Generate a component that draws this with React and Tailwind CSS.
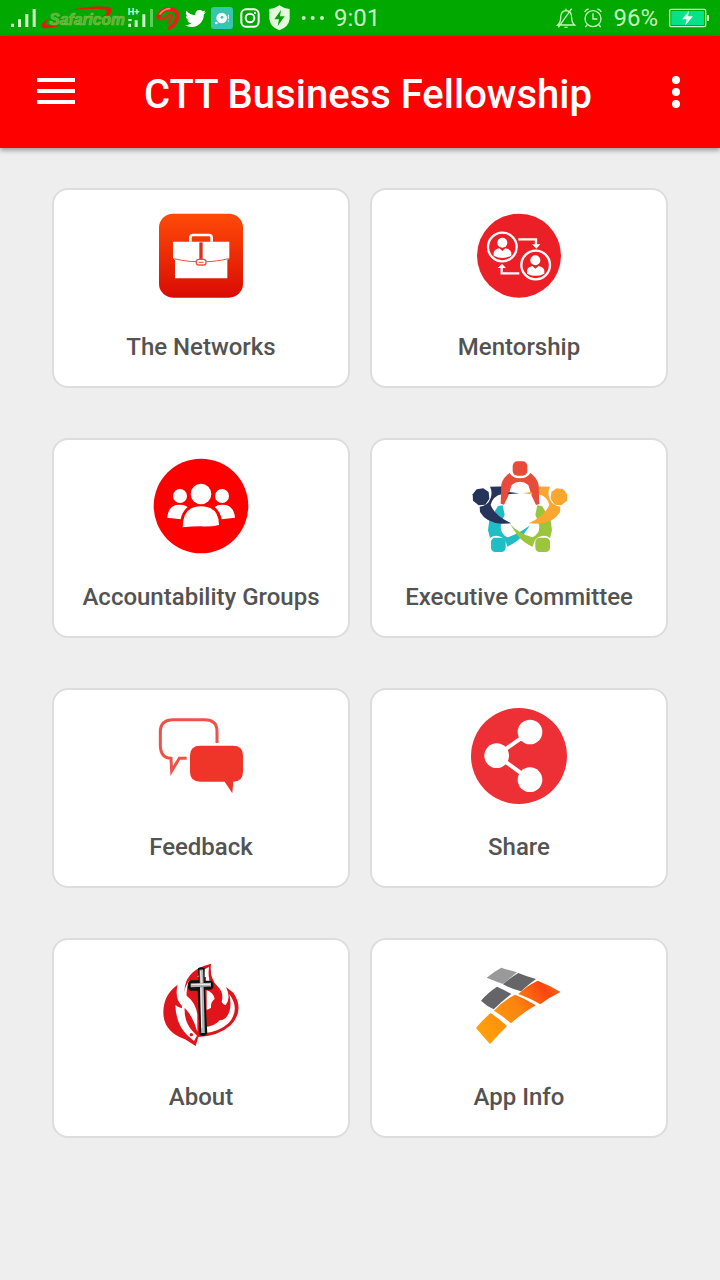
import React from "react";
import { FaTwitter } from "react-icons/fa";

const BriefcaseIcon = () => (
	<svg viewBox="9 9 288 288" className="size-24" aria-hidden="true">
		<defs>
			<linearGradient id="briefcase" x1="0" y1="0" x2="0" y2="1">
				<stop offset="0" stopColor="#ff4b08" />
				<stop offset="1" stopColor="#d90b04" />
			</linearGradient>
		</defs>
		<rect x="27" y="26" width="252" height="252" rx="42" fill="url(#briefcase)" />
		<path d="M121 110V98q0-8 9-8h46q9 0 9 8v12" fill="none" stroke="#fff" strokeWidth="8" />
		<path d="M69 110h169v50l-6 5v55H75v-55l-6-5z" fill="#fff" />
		<path d="M153 112v52" stroke="#d8321c" strokeWidth="10" />
		<path d="M71 161q40 9 67 9M236 161q-40 9-67 9" fill="none" stroke="#e8553c" strokeWidth="3" />
		<rect x="139" y="163" width="29" height="17" rx="7" fill="#fff" stroke="#e8553c" strokeWidth="4" />
		<path d="M146 172h15" stroke="#e8553c" strokeWidth="3" />
	</svg>
);

const MentorIcon = () => (
	<svg viewBox="9 9 288 288" className="size-24" aria-hidden="true">
		<circle cx="153" cy="152" r="126" fill="#ec1f27" />
		<g fill="none" stroke="#fff" strokeWidth="7">
			<circle cx="103" cy="126" r="43" />
			<circle cx="203" cy="180" r="43" />
			<path d="M151 103h53v18M154 205h-53v-19" />
		</g>
		<g fill="#fff">
			<path d="M192 118h25l-12 13zM89 189h25l-12-13z" />
			<circle cx="103" cy="113" r="15" />
			<path d="M77 152v-9q3-11 17-13l9 8 9-8q15 2 18 13v9q-26 14-53 0z" />
			<circle cx="202" cy="166" r="15" />
			<path d="M177 206v-10q3-10 16-13l9 8 10-8q14 3 17 13v10q-26 13-52 0z" />
		</g>
	</svg>
);

const GroupIcon = () => (
	<svg viewBox="21 18 288 288" className="size-24" aria-hidden="true">
		<circle cx="165" cy="162" r="142" fill="#fe0000" />
		<g fill="#fff">
			<circle cx="102" cy="132" r="21" />
			<circle cx="228" cy="132" r="21" />
			<path d="M64 197q3-39 36-39 15-1 25 7-17 14-21 37zM267 197q-4-39-37-39-14-1-24 7 17 14 21 37z" />
			<circle cx="165" cy="126" r="31" />
			<path d="M110 226q0-63 54-63 55 0 55 56-26 6-54 4-27 0-55 3z" />
		</g>
	</svg>
);

const CommitteeIcon = () => (
	<svg viewBox="21 18 288 288" className="size-24" aria-hidden="true">
		<g fill="#1fbdc5">
			<path d="M116 160l-14 2-26 42-4 31 6 23q10-8 24-6 22 2 28 32 30-14 48-36l20-28q-33 25-67 36-27-12-19-44l10-24z" />
			<rect x="81" y="257" width="44" height="43" rx="13" />
		</g>
		<g fill="#9bc53b">
			<path d="M220 160l14 2 26 42 4 31-6 23q-10-8-24-6-22 2-28 32-26-10-44-32l-24-36q27 29 67 40 27-12 19-44l-10-24z" />
			<rect x="214" y="257" width="44" height="43" rx="13" />
		</g>
		<g fill="#26345c">
			<path d="M78 104l57-1 31 21-54 3q-24 5-32 31 10 32 62 56l-30 1q-46-3-64-35l-1-16q25-2 33-26 6-18-2-34z" />
			<path d="M38 112l20-3 16 11 2 20-12 18-20 2-17-14-1-19z" />
		</g>
		<g fill="#fba62f">
			<path d="M258 104l-57-1-25 21 48 3q24 5 32 31-10 32-62 56l30 1q46-3 64-35l1-16q-25-2-33-26-6-18 2-34z" />
			<path d="M298 112l-20-3-16 11-2 20 12 18 20 2 17-14 1-19z" />
		</g>
		<path d="M144 92q24-24 48 0l14 32-38 6-38-6z" fill="#fff" />
		<g fill="#e94b3b">
			<path d="M120 158l-10-3 2-58q5-21 25-34 8 16 31 16 22 0 31-16 20 14 25 35l2 58-10 3-13-28-10-32q-25-20-50 0l-10 32z" />
			<rect x="146" y="28" width="44" height="43" rx="14" />
		</g>
		<path d="M134 121l32 3-32 4zM202 121l-26 3 26 4z" fill="#fff" />
		<path d="M135 120l31 4-36 3z" fill="#26345c" />
		<path d="M201 120l-25 4 30 3z" fill="#fba62f" />
	</svg>
);

const FeedbackIcon = () => (
	<svg viewBox="9 9 288 288" className="size-24" aria-hidden="true">
		<path
			d="M201 114V78q0-34-38-34H70q-39 0-39 36v40q0 39 32 40l2 38 23-38h22"
			fill="none"
			stroke="#f0524a"
			strokeWidth="9"
		/>
		<path
			d="M151 122h98q30 0 30 29v49q0 29-29 30l-3 35-23-35h-73q-31 0-31-29v-50q0-29 31-29z"
			fill="#ef3529"
		/>
	</svg>
);

const ShareIcon = () => (
	<svg viewBox="21 18 288 288" className="size-24" aria-hidden="true">
		<circle cx="165" cy="162" r="144" fill="#ec3036" />
		<path d="M198 90L98 160l100 73" fill="none" stroke="#fff" strokeWidth="12" />
		<g fill="#fff">
			<circle cx="198" cy="90" r="37" />
			<circle cx="98" cy="161" r="37" />
			<circle cx="198" cy="233" r="37" />
		</g>
	</svg>
);

const FlameIcon = () => (
	<svg viewBox="9 9 288 288" className="size-24" aria-hidden="true">
		<path
			d="M183 26q-46 12-63 35-19 24-16 53-10 20-8 39-23-23-13-64-43 30-43 83 0 58 65 81l32 20 8-27q60-2 97-35 43-45 8-98l-22-17q16 33-1 55-9-3-12-11 8-27-13-47-24-24-19-67z"
			fill="#e0141b"
		/>
		<path d="M177 36q-4 30 5 52h-14V66h-26q13-20 35-30z" fill="#fff" />
		<path
			d="M118 76q-10 22-8 46 28 22 32 56v52q-12-44-38-72-2 40 20 66l17 18-9 16-20-17Q78 208 76 150q10 8 20 10-2-34 6-48 4-20 16-36z"
			fill="#fff"
		/>
		<path d="M170 106q20 6 24 26-13 10-11 26-8 6-13 6z" fill="#fff" />
		<path
			d="M238 118q34 46-2 86-26 24-68 30l-1-18q26-2 42-20 22-2 29-26 7-22 0-52z"
			fill="#fff"
		/>
		<circle cx="124" cy="239" r="5" fill="#e0141b" />
		<path
			d="M144 40q9-7 20 0v37h20l6 7v15l-8 5h-17l7 132q-11 11-23 4l-6-133h-23l-6-7V84l8-8h24z"
			fill="#111"
		/>
		<path d="M154 44l5 190M122 91l61-2" stroke="#b0b2b3" strokeWidth="11" fill="none" />
		<path d="M152 48l2 35M124 88h56M153 98l2 120" stroke="#f2f2f2" strokeWidth="3" fill="none" />
	</svg>
);

const TilesIcon = () => (
	<svg viewBox="9 9 288 288" className="size-24" aria-hidden="true">
		<defs>
			<linearGradient id="tiles" gradientUnits="userSpaceOnUse" x1="40" y1="240" x2="270" y2="90">
				<stop offset="0" stopColor="#ffa00a" />
				<stop offset="0.5" stopColor="#fb850f" />
				<stop offset="0.85" stopColor="#fb4510" />
				<stop offset="1" stopColor="#fa6818" />
			</linearGradient>
		</defs>
		<path d="M100 38q25 8 47 14l-42 35q-22-8-49-19 21-18 44-30z" fill="#999" />
		<path d="M151 54q26 11 53 18-21 15-45 37-29-7-54-21 20-19 46-34zM87 95q21 9 43 22-30 23-53 46-20-9-38-26 19-23 48-42z" fill="#656568" />
		<path
			d="M209 77q34 13 69 34-34 15-61 37-32-19-66-31 24-24 58-40zM141 119q32 12 62 32-40 23-74 54-25-22-51-38 27-30 63-48zM68 174q26 18 49 39-23 23-51 54-22-24-42-48 22-27 44-45z"
			fill="url(#tiles)"
		/>
	</svg>
);

const tiles = [
	{ label: "The Networks", Icon: BriefcaseIcon },
	{ label: "Mentorship", Icon: MentorIcon },
	{ label: "Accountability Groups", Icon: GroupIcon },
	{ label: "Executive Committee", Icon: CommitteeIcon },
	{ label: "Feedback", Icon: FeedbackIcon },
	{ label: "Share", Icon: ShareIcon },
	{ label: "About", Icon: FlameIcon },
	{ label: "App Info", Icon: TilesIcon },
];

const StatusBar = () => (
	<div className="flex h-9 items-center justify-between bg-[#00a800] pl-[10px] pr-2 text-2xl text-[#c8f5c0]">
		<div className="flex items-center">
			<svg viewBox="30 0 84 108" className="h-9 w-7" fill="#d5f8cf" aria-hidden="true">
				<path d="M33 71h9v10h-9zM54 58h9v23h-9zM76 42h9v39h-9zM98 27h9v54h-9z" />
			</svg>
			<svg viewBox="114 0 264 108" className="h-9 w-[88px]" role="img" aria-label="Safaricom">
				<path
					d="M149 54q-27 16-25 26 5 10 54-2-38-2-40-6-2-5 11-18zM205 31q60-15 116-11 16 3 14 12-3 13-20 20l-8-1q14-11 14-16 0-7-26-8-40-1-90 4z"
					fill="#e31b0c"
				/>
				<text
					x="148"
					y="74"
					fontSize="47"
					fontStyle="italic"
					fontWeight="700"
					fontFamily="'Liberation Sans', sans-serif"
					fill="#48b832"
					stroke="#8cb84c"
					strokeWidth="2">
					Safaricom
				</text>
			</svg>
			<svg viewBox="378 0 84 108" className="h-9 w-7" fill="#d5f8cf" aria-hidden="true">
				<text x="383" y="45" fontSize="28" fontWeight="700" fontFamily="Roboto, sans-serif">
					H+
				</text>
				<path d="M385 71h8v10h-8zM404 61h9v20h-9zM427 43h9v38h-9zM385 57h10v6h-10z" />
				<path d="M450 27h9v54h-9z" opacity="0.45" />
			</svg>
			<svg viewBox="462 0 84 108" className="h-9 w-7" fill="none" strokeLinecap="round" aria-hidden="true">
				<path d="M475 52q6-22 32-25 26 1 25 23-3 22-23 33" stroke="#ed1c1c" strokeWidth="12" />
				<path d="M479 58q18-1 26-12 12-4 10 5-2 9-11 18" stroke="#e32a1c" strokeWidth="8" />
				<path d="M480 42q10-14 29-16" stroke="#ff8375" strokeWidth="5" />
			</svg>
			<div className="flex w-[26px] justify-center text-white">
				<FaTwitter size={21} />
			</div>
			<svg viewBox="84 0 84 108" className="h-9 w-7" aria-hidden="true">
				<rect x="93" y="21" width="66" height="66" rx="9" fill="#36c5ad" />
				<circle cx="125" cy="54" r="16" fill="#fff" />
				<circle cx="126" cy="52" r="4" fill="#36c5ad" />
				<circle cx="109" cy="69" r="4" fill="#fff" />
				<path d="M145 44v13M145 61v4" stroke="#fff" strokeWidth="3" />
			</svg>
			<svg viewBox="168 0 84 108" className="h-9 w-7" fill="none" stroke="#fff" strokeWidth="6" aria-hidden="true">
				<rect x="184" y="28" width="52" height="52" rx="14" />
				<circle cx="210" cy="54" r="13" />
				<circle cx="225" cy="39" r="3" fill="#fff" stroke="none" />
			</svg>
			<svg viewBox="252 0 90 108" className="h-9 w-[30px]" aria-hidden="true">
				<path d="M298 16q14 10 31 11v30q-3 24-31 34-27-10-30-34V27q17-1 30-11z" fill="#e3fbdc" />
				<path d="M303 30l-20 28h14l-4 20 21-29h-14z" fill="#0aa00a" />
			</svg>
			<svg viewBox="342 0 120 108" className="h-9 w-10" fill="#c8f5c0" aria-hidden="true">
				<circle cx="371" cy="54" r="6" />
				<circle cx="398" cy="54" r="6" />
				<circle cx="426" cy="54" r="6" />
			</svg>
			<span>9:01</span>
		</div>
		<div className="flex items-center">
			<svg viewBox="42 0 78 108" className="h-9 w-[26px]" fill="none" stroke="#c8f5c0" strokeWidth="4" aria-hidden="true">
				<path d="M56 75q9-7 9-22 0-20 16-21 17 1 17 21 0 15 9 22zM81 26v6M76 82h10M58 82l40-56" />
			</svg>
			<svg viewBox="120 0 84 108" className="h-9 w-7" fill="none" stroke="#c8f5c0" strokeWidth="4" aria-hidden="true">
				<circle cx="162" cy="56" r="24" />
				<path d="M162 40v17h13M137 36q4-8 12-9M187 36q-4-8-12-9M145 74l-6 7M179 74l6 7" />
			</svg>
			<span className="pl-[6px] pr-2">96%</span>
			<svg viewBox="378 0 138 108" className="h-9 w-[46px]" aria-hidden="true">
				<rect x="389" y="28" width="108" height="52" rx="4" fill="#00a800" stroke="#c8f5c0" strokeWidth="4" />
				<rect x="394" y="33" width="98" height="42" fill="#00e38a" />
				<path d="M501 45h6v18h-6z" fill="#c8f5c0" />
				<path d="M447 32l-21 26h14l-5 19 24-28h-15z" fill="#e9fff2" />
			</svg>
		</div>
	</div>
);

const Header = () => (
	<header className="relative flex h-28 items-center bg-[#fe0000] pl-9 pr-7 text-white shadow-[0_2px_5px_rgba(0,0,0,0.4)]">
		<button type="button" aria-label="Open menu" className="h-12 w-10">
			<svg viewBox="0 0 40 48" className="h-12 w-10" fill="currentColor">
				<path d="M1 10h38v4H1zM1 21h38v4H1zM1 32h38v4H1z" />
			</svg>
		</button>
		<h1 className="flex-1 pt-[6px] text-center text-[40px] leading-[48px] font-medium">
			CTT Business Fellowship
		</h1>
		<button type="button" aria-label="More options" className="h-12 w-8">
			<svg viewBox="0 0 32 48" className="h-12 w-8" fill="currentColor">
				<circle cx="16" cy="12" r="4" />
				<circle cx="16" cy="24" r="4" />
				<circle cx="16" cy="36" r="4" />
			</svg>
		</button>
	</header>
);

const App = () => {
	return (
		<div className="min-h-screen bg-[#eeeeee] font-[Roboto,sans-serif]">
			<StatusBar />
			<Header />
			<main className="grid grid-cols-2 gap-x-5 gap-y-[50px] px-[52px] py-10">
				{tiles.map(({ label, Icon }) => (
					<button
						key={label}
						type="button"
						className="flex h-[200px] flex-col items-center rounded-2xl border-2 border-[#dddddd] bg-white pt-[18px]">
						<Icon />
						<span className="pt-7 text-2xl leading-[30px] font-medium whitespace-nowrap text-[#535353]">
							{label}
						</span>
					</button>
				))}
			</main>
		</div>
	);
};

export default App;
